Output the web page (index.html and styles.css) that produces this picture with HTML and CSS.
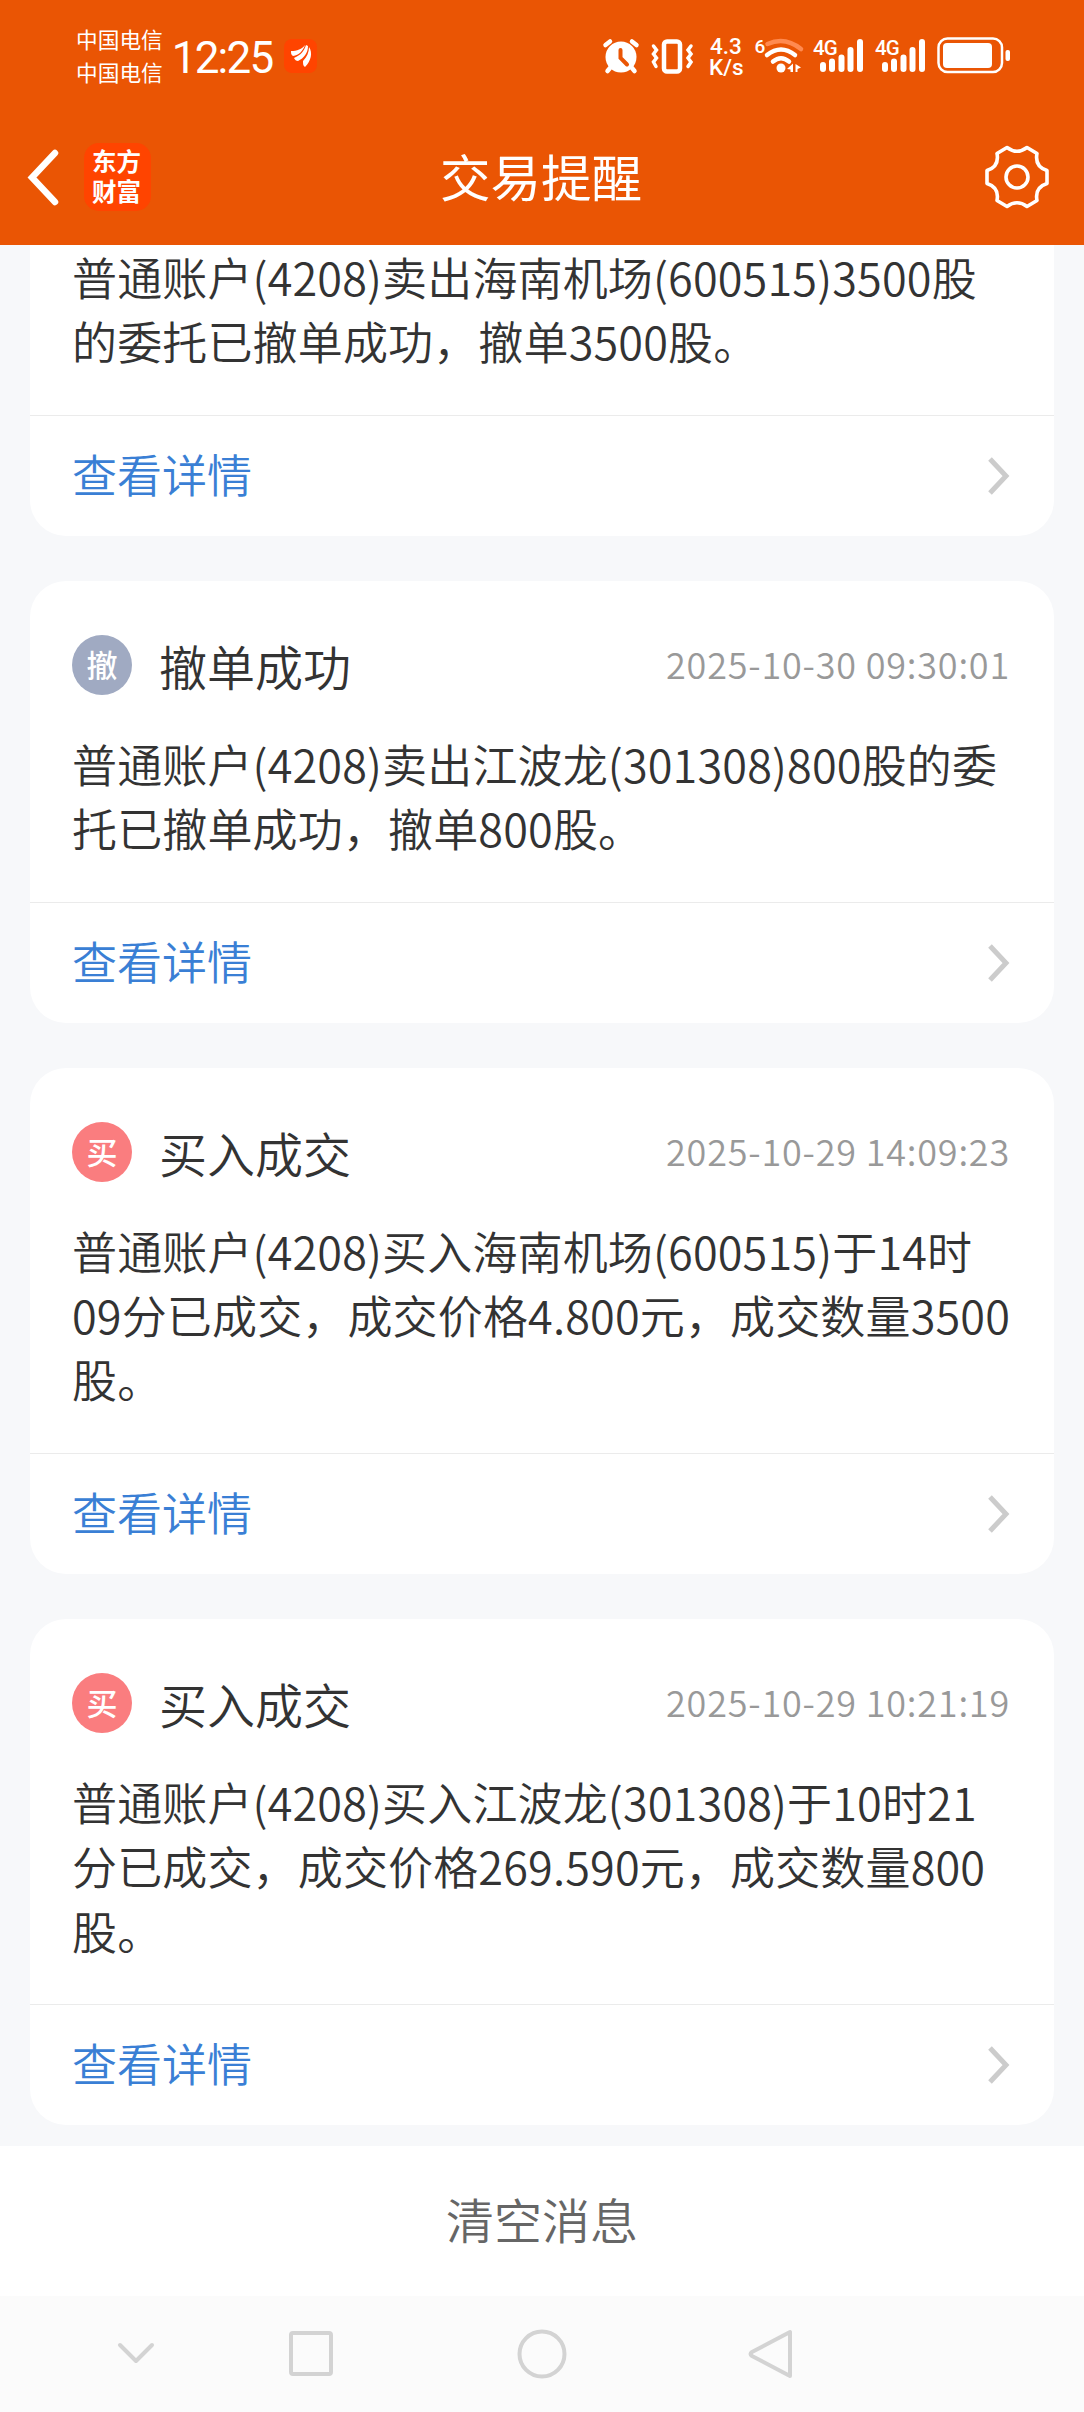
FILE: index.html
```html
<!DOCTYPE html>
<html lang="zh-CN">
<head>
    <meta charset="UTF-8">
    <meta name="viewport" content="width=device-width, initial-scale=1.0">
    <title>交易提醒</title>
    <link rel="stylesheet" href="styles.css">
</head>
<body>
    <header class="top">
        <div class="status-bar">
            <div class="carriers">
                <span>中国电信</span>
                <span>中国电信</span>
            </div>
            <span class="clock">12:25</span>
            <svg class="app-icon" width="33" height="34" viewBox="0 0 33 34">
                <rect width="33" height="34" rx="8" fill="#ff4400"/>
                <path d="M7 12C13 12 18 10 21 6C19 12 15 16 9 17C7 16 7 14 7 12Z" fill="#fff"/>
                <path d="M10 19C17 16 20 12 22 6L24 7C24 14 20 19 14 22C12 22 11 21 10 19Z" fill="#fff"/>
                <path d="M19 22C23 18 25 13 25 8C29 14 27 22 21 28C19 27 19 25 19 22Z" fill="#fff"/>
            </svg>
            <svg class="status-icons" width="410" height="64" viewBox="602 24 410 64">
                <!-- будильник -->
                <circle cx="621" cy="57" r="15.5" fill="#fff"/>
                <path d="M605.500 45L610 41.500M632 41.500L636.500 45M610 68L607.500 71M632 68L634.500 71" class="line4"/>
                <path d="M620.500 50V58L627 64.500" class="cut"/>
                <!-- вибрация -->
                <rect x="664" y="41.500" width="16" height="30" rx="3" class="line4"/>
                <path d="M653.500 46L656.500 50L653.500 54L656.500 58L653.500 62L656 66.500" class="line3"/>
                <path d="M691 46L688 50L691 54L688 58L691 62L688 66.500" class="line3"/>
                <text x="710" y="54" class="speed">4.3</text>
                <text x="709" y="75" class="speed">K/s</text>
                <!-- wi-fi -->
                <text x="754.500" y="53" class="small six">6</text>
                <path d="M767.500 44Q785 36 801 49" class="wave-off"/>
                <path d="M767 55Q781 44 795 55M773 61.500Q781 55 789 61.500" class="line4"/>
                <circle cx="781" cy="68" r="4.500" fill="#fff"/>
                <path d="M787 69L793 63.500V72H790.500V69.500ZM795.500 64L801 67.500L797.500 69V72H795.500Z" fill="#fff"/>
                <!-- сигнал -->
                <text x="813" y="55" class="small">4G</text>
                <path d="M823 65V69M832 61.500V69M841.500 57.500V69M850.500 50V69M860 42V69" class="bars"/>
                <text x="875" y="55" class="small">4G</text>
                <path d="M885 65V69M894 61.500V69M903.500 57.500V69M912.500 50V69M922 42V69" class="bars"/>
                <!-- батарея -->
                <rect x="938.500" y="38.500" width="63.500" height="33.500" rx="9" class="line3 thin"/>
                <rect x="943" y="43" width="49" height="25" rx="4" fill="#fff"/>
                <rect x="1005.500" y="50" width="4.500" height="11" rx="2" fill="#fff"/>
            </svg>
        </div>
        <div class="title-bar">
            <div class="title-left">
                <svg width="34" height="58" viewBox="0 0 34 58">
                    <path d="M29 5L6 29.500L29 54" fill="none" stroke="#fff" stroke-width="6.500" stroke-linecap="round"/>
                </svg>
                <div class="logo"><span>东方</span><span>财富</span></div>
            </div>
            <h1>交易提醒</h1>
            <svg class="gear" width="66" height="66" viewBox="0 0 66 66">
                <path d="M23 3.500Q33 11 43 3.500L53 9.500Q50.500 22.500 63 26.500V39.500Q50.500 43.500 53 56.500L43 62.500Q33 55 23 62.500L13 56.500Q15.500 43.500 3 39.500V26.500Q15.500 22.500 13 9.500Z"/>
                <circle cx="33" cy="33" r="11"/>
            </svg>
        </div>
    </header>

    <main class="messages">
        <section class="card card-cut">
            <p class="text">普通账户(4208)卖出海南机场(600515)3500股<br>的委托已撤单成功，撤单3500股。</p>
            <div class="more">
                <a>查看详情</a>
                <svg class="arrow" width="22" height="38" viewBox="0 0 22 38"><path d="M2 2L18 19L2 36"/></svg>
            </div>
        </section>

        <section class="card">
            <div class="card-head">
                <span class="badge cancel">撤</span>
                <h2>撤单成功</h2>
                <time>2025-10-30 09:30:01</time>
            </div>
            <p class="text">普通账户(4208)卖出江波龙(301308)800股的委<br>托已撤单成功，撤单800股。</p>
            <div class="more">
                <a>查看详情</a>
                <svg class="arrow" width="22" height="38" viewBox="0 0 22 38"><path d="M2 2L18 19L2 36"/></svg>
            </div>
        </section>

        <section class="card">
            <div class="card-head">
                <span class="badge buy">买</span>
                <h2>买入成交</h2>
                <time>2025-10-29 14:09:23</time>
            </div>
            <p class="text">普通账户(4208)买入海南机场(600515)于14时<br>09分已成交，成交价格4.800元，成交数量3500<br>股。</p>
            <div class="more">
                <a>查看详情</a>
                <svg class="arrow" width="22" height="38" viewBox="0 0 22 38"><path d="M2 2L18 19L2 36"/></svg>
            </div>
        </section>

        <section class="card">
            <div class="card-head">
                <span class="badge buy">买</span>
                <h2>买入成交</h2>
                <time>2025-10-29 10:21:19</time>
            </div>
            <p class="text">普通账户(4208)买入江波龙(301308)于10时21<br>分已成交，成交价格269.590元，成交数量800<br>股。</p>
            <div class="more">
                <a>查看详情</a>
                <svg class="arrow" width="22" height="38" viewBox="0 0 22 38"><path d="M2 2L18 19L2 36"/></svg>
            </div>
        </section>
    </main>

    <div class="clear">清空消息</div>

    <nav class="nav">
        <svg width="40" height="54" viewBox="0 0 40 54"><path d="M4 18L20 34L36 18"/></svg>
        <svg width="48" height="54" viewBox="0 0 48 54"><rect x="4" y="6" width="40" height="41" rx="2"/></svg>
        <svg width="54" height="54" viewBox="0 0 54 54"><circle cx="27" cy="27" r="22.500"/></svg>
        <svg width="48" height="54" viewBox="0 0 48 54"><path d="M43 5V49L5 29Q2 27 5 25Z"/></svg>
    </nav>
</body>
</html>
```

FILE: styles.css
```css
* {
    box-sizing: border-box;
}
body {
    margin: 0;
    width: 1084px;
    height: 2412px;
    display: flex;
    flex-direction: column;
    overflow: hidden;
    background-color: #f7f8fa;
    font-family: "Noto Sans CJK SC", sans-serif;
    font-weight: 350;
    color: #333;
}
h1, h2, p {
    margin: 0;
    font-weight: inherit;
}
svg {
    display: block;
    flex: none;
}

/* header */
.top {
    height: 245px;
    flex: none;
    background-color: #ea5504;
    color: #fff;
    font-weight: 400;
}
.status-bar {
    height: 112px;
    padding: 0 72px 0 76px;
    display: flex;
    align-items: center;
}
.carriers {
    padding-bottom: 2px;
    display: flex;
    flex-direction: column;
    font-size: 21.7px;
    line-height: 33px;
}
.clock {
    margin-left: 9px;
    padding-top: 3px;
    width: 101px;
    font-family: Roboto, sans-serif;
    font-size: 44px;
    letter-spacing: -1.8px;
}
.app-icon {
    margin-left: 11px;
}
.status-icons {
    margin-left: auto;
}
.status-icons text {
    fill: #fff;
    font-family: Roboto, sans-serif;
    font-weight: 500;
}
.status-icons .speed {
    font-size: 22.5px;
}
.status-icons .small {
    font-size: 20.5px;
    letter-spacing: -0.8px;
}
.status-icons .six {
    font-size: 19px;
}
.line4, .line3, .bars, .cut, .wave-off {
    fill: none;
    stroke: #fff;
    stroke-width: 4.5;
    stroke-linecap: round;
}
.line3 {
    stroke-width: 3.5;
}
.thin {
    stroke-width: 2.5;
}
.bars {
    stroke-width: 6;
}
.cut {
    stroke: #ea5504;
    stroke-width: 4;
}
.wave-off {
    stroke: #ff8a50;
}
.title-bar {
    height: 133px;
    padding: 0 34px 3px 26px;
    display: grid;
    grid-template-columns: 1fr 204px 1fr;
    align-items: center;
}
.title-left {
    display: flex;
    align-items: center;
    gap: 24px;
}
.title-bar h1 {
    padding: 0 0 4px 4px;
    font-size: 50.5px;
    line-height: 66px;
    text-align: center;
    white-space: nowrap;
}
.logo {
    width: 67px;
    height: 68px;
    padding: 0 2px 3px 0;
    border-radius: 15px;
    background-color: #ff4400;
    display: flex;
    flex-direction: column;
    align-items: center;
    justify-content: center;
    font-size: 24.5px;
    font-weight: 700;
    line-height: 30px;
}
.gear {
    justify-self: end;
    fill: none;
    stroke: #fff;
    stroke-width: 3.6;
    stroke-linejoin: round;
}

/* messages */
.messages {
    height: 1901px;
    flex: none;
    padding: 0 30px;
    display: flex;
    flex-direction: column;
    gap: 45px;
}
.card {
    flex: none;
    border-radius: 36px;
    background-color: #fff;
}
.card-cut {
    border-radius: 0 0 36px 36px;
}
.card-head {
    height: 151px;
    padding: 54px 44px 0 42px;
    display: flex;
    align-items: flex-start;
}
.badge {
    width: 60px;
    height: 60px;
    border-radius: 50%;
    color: #fff;
    font-size: 31px;
    font-weight: 500;
    line-height: 57px;
    text-align: center;
}
.cancel {
    background-color: #a0aac2;
}
.buy {
    background-color: #fa7d7f;
}
.card-head h2 {
    margin-left: 27px;
    font-size: 48px;
    line-height: 60px;
}
.card-head time {
    margin-left: auto;
    font-size: 36px;
    line-height: 57px;
    letter-spacing: 0.8px;
    color: #999;
}
.text {
    padding: 0 0 41px 42px;
    font-size: 45px;
    line-height: 64.4px;
    letter-spacing: 0.15px;
    white-space: nowrap;
}
.more {
    height: 121px;
    padding: 0 44px 0 42px;
    border-top: 1px solid #ebebeb;
    display: flex;
    align-items: center;
    justify-content: space-between;
    font-size: 45px;
    color: #3a7fd5;
}
.more a {
    padding-bottom: 5px;
}
.arrow {
    fill: none;
    stroke: #ccc;
    stroke-width: 5;
}

/* bottom */
.clear {
    height: 150px;
    flex: none;
    background-color: #fff;
    color: #666;
    font-size: 48px;
    line-height: 145px;
    text-align: center;
}
.nav {
    flex: 1;
    padding: 0 288px 0 116px;
    display: flex;
    align-items: center;
    background-color: #fbfbfb;
    fill: none;
    stroke: #d3d3d3;
    stroke-width: 4;
    stroke-linecap: round;
    stroke-linejoin: round;
}
.nav svg:nth-child(2) {
    margin-left: 131px;
}
.nav svg:nth-child(3) {
    margin-left: 180px;
}
.nav svg:nth-child(4) {
    margin-left: 178px;
}
```
